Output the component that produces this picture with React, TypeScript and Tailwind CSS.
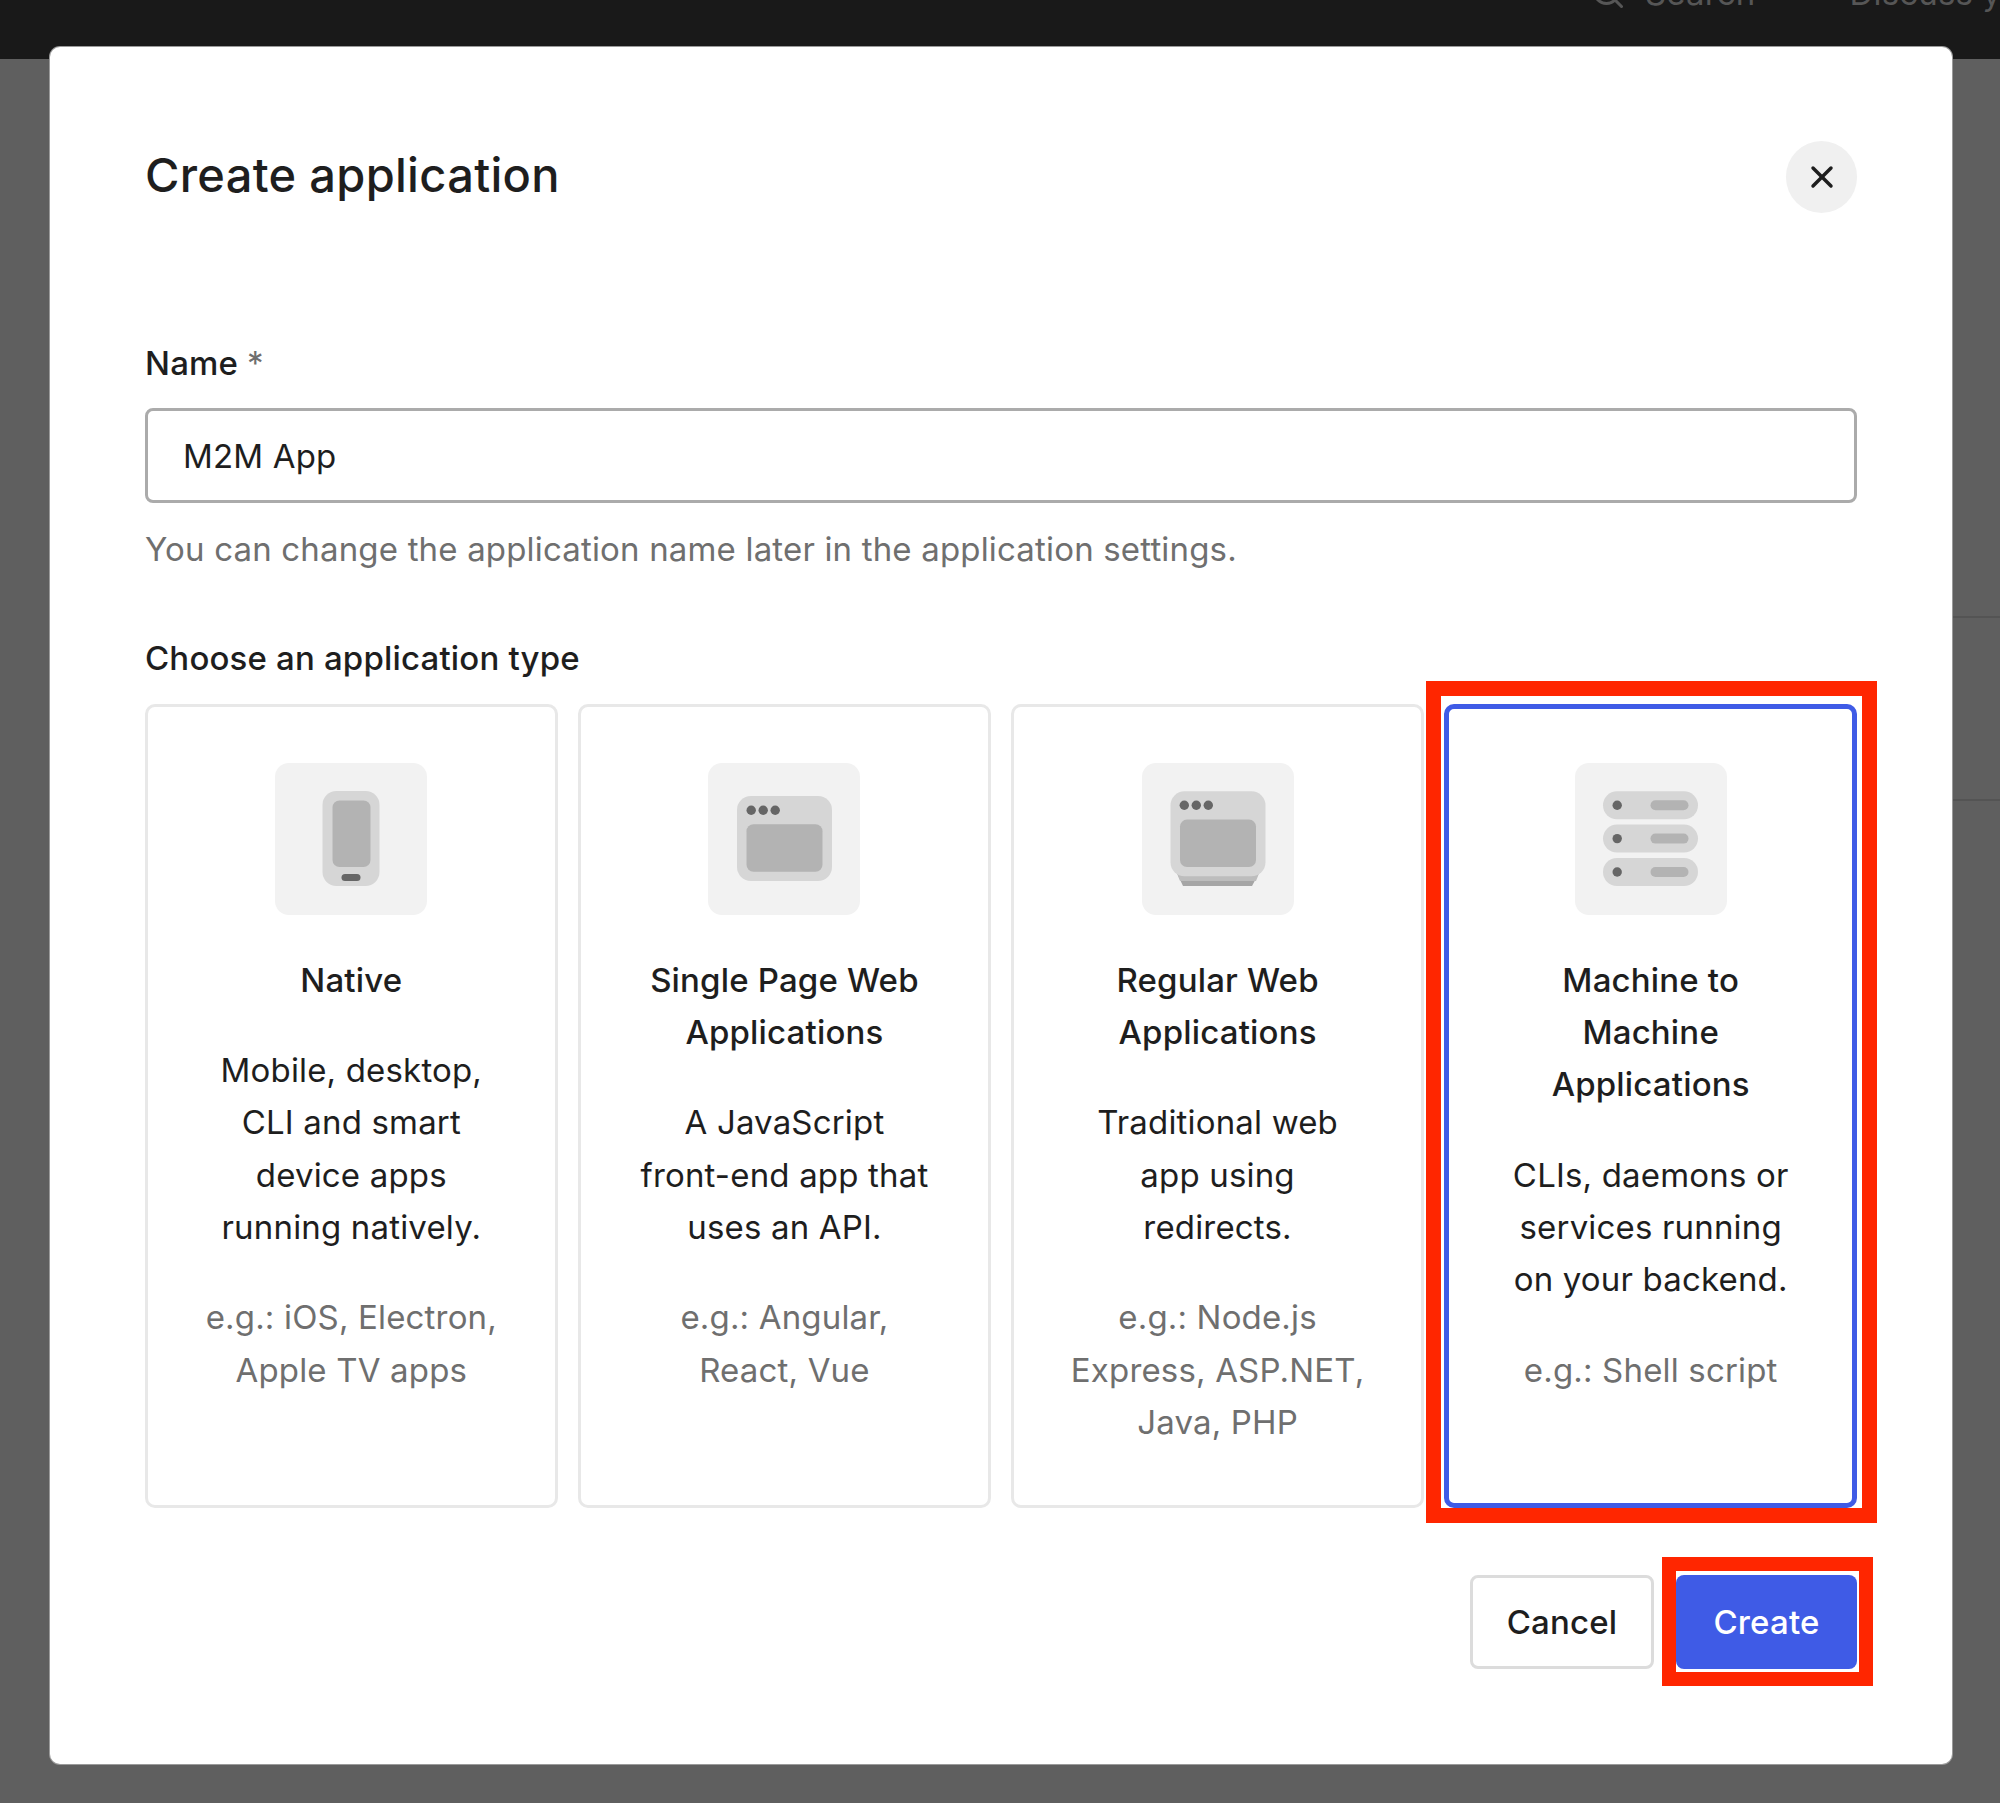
import React from 'react';
import { Search, X } from 'lucide-react';

const dots = (x: number, y: number) => (
  <g fill="#666666">
    <circle cx={x} cy={y} r="4.7" />
    <circle cx={x + 12} cy={y} r="4.7" />
    <circle cx={x + 24} cy={y} r="4.7" />
  </g>
);

const NativeIcon = () => (
  <>
    <rect x="47.5" y="28" width="57" height="95" rx="14" fill="#d6d6d6" />
    <rect x="57.5" y="37.5" width="38" height="66.5" rx="7" fill="#b3b3b3" />
    <rect x="66.5" y="111" width="19" height="7" rx="3.5" fill="#666666" />
  </>
);

const SpaIcon = () => (
  <>
    <rect x="29" y="33" width="95" height="85" rx="14" fill="#d6d6d6" />
    <rect x="38.5" y="61.3" width="76" height="47.4" rx="7" fill="#b3b3b3" />
    {dots(43.2, 47.3)}
  </>
);

const RegularIcon = () => (
  <>
    <path d="M34 108 L118 108 L110 123 L41 123 Z" fill="#a6a6a6" />
    <path d="M34 108 L118 108 L114 118 L38 118 Z" fill="#bdbdbd" />
    <rect x="28.5" y="28.3" width="95" height="85" rx="14" fill="#d6d6d6" />
    <rect x="38" y="56.6" width="76" height="47.4" rx="7" fill="#b3b3b3" />
    {dots(42.3, 42.3)}
  </>
);

const M2MIcon = () => (
  <>
    {[28.3, 61.6, 95].map((y) => (
      <g key={y}>
        <rect x="28" y={y} width="95" height="28" rx="14" fill="#d6d6d6" />
        <circle cx="42.2" cy={y + 14} r="4.7" fill="#666666" />
        <rect x="75.5" y={y + 9} width="38" height="10" rx="5" fill="#b3b3b3" />
      </g>
    ))}
  </>
);

const appTypes = [
  {
    title: ['Native'],
    desc: ['Mobile, desktop,', 'CLI and smart', 'device apps', 'running natively.'],
    eg: ['e.g.: iOS, Electron,', 'Apple TV apps'],
    icon: <NativeIcon />,
  },
  {
    title: ['Single Page Web', 'Applications'],
    desc: ['A JavaScript', 'front-end app that', 'uses an API.'],
    eg: ['e.g.: Angular,', 'React, Vue'],
    icon: <SpaIcon />,
  },
  {
    title: ['Regular Web', 'Applications'],
    desc: ['Traditional web', 'app using', 'redirects.'],
    eg: ['e.g.: Node.js', 'Express, ASP.NET,', 'Java, PHP'],
    icon: <RegularIcon />,
  },
  {
    title: ['Machine to', 'Machine', 'Applications'],
    desc: ['CLIs, daemons or', 'services running', 'on your backend.'],
    eg: ['e.g.: Shell script'],
    icon: <M2MIcon />,
    selected: true,
  },
];

const Lines = ({ items }: { items: string[] }) => (
  <>
    {items.map((line) => (
      <div key={line}>{line}</div>
    ))}
  </>
);

export default function App() {
  return (
    <div className="relative h-[1803px] w-[2000px] overflow-hidden bg-[#5f5f5f] font-['Inter',sans-serif] text-[33px] leading-[52.3px] tracking-[0.17px] text-[#1e1e1e]">
      <header className="flex h-[59px] items-start bg-[#191919] pl-[1590px] text-[#565656]">
        <div className="-mt-[33px] flex items-center">
          <Search size={36} className="mr-[19px]" />
          <span>Search</span>
          <span className="ml-[94px] w-[154px] overflow-hidden whitespace-nowrap">Discuss your</span>
        </div>
      </header>

      {/* page rows showing through the backdrop */}
      <div className="absolute top-[616px] right-0 h-[2px] w-[60px] bg-[#545454]" />
      <div className="absolute top-[799px] right-0 h-[2px] w-[60px] bg-[#545454]" />

      <div className="absolute top-[47px] left-[50px] h-[1717px] w-[1902px] rounded-[10px] bg-white px-[95px] pt-[94px] ring-1 ring-[#9a9a9a]">
        <div className="flex h-[72px] items-center justify-between">
          <h1 className="-mt-[4px] text-[47px] leading-[60px] font-medium tracking-[0.3px]">Create application</h1>
          <button className="flex h-[72px] w-[71px] items-center justify-center rounded-full bg-[#f0f0f0]">
            <X size={36} strokeWidth={2.3} />
          </button>
        </div>

        <div className="mt-[124px] font-medium">
          Name <span className="font-normal text-[#6f6f6f]">*</span>
        </div>
        <div className="mt-[19px] flex h-[95px] items-center rounded-[8px] border-[3px] border-[#ababab] px-[35px]">
          M2M App
        </div>
        <p className="mt-[20px] text-[#6f6f6f]">You can change the application name later in the application settings.</p>

        <div className="mt-[56px] font-medium">Choose an application type</div>
        <div className="mt-[20px] grid grid-cols-4 gap-[20.5px]">
          {appTypes.map((t) => (
            <div
              key={t.title[0]}
              className={`relative h-[804px] rounded-[10px] text-center ${
                t.selected
                  ? 'border-[5px] border-[#3f5be6] px-[16px] pt-[54px]'
                  : 'border-[3px] border-[#e8e8e8] px-[18px] pt-[56px]'
              }`}
            >
              <svg viewBox="0 0 152 152" className="mx-auto block h-[152px] w-[152px]">
                <rect width="152" height="152" rx="14" fill="#f2f2f2" />
                {t.icon}
              </svg>
              <div className="mt-[39px] font-medium">
                <Lines items={t.title} />
              </div>
              <div className="mt-[38px]">
                <Lines items={t.desc} />
              </div>
              <div className="mt-[38px] text-[#6f6f6f]">
                <Lines items={t.eg} />
              </div>
              {t.selected && (
                <div className="absolute -top-[28px] -right-[25px] -bottom-[20px] -left-[23px] border-[15px] border-[#ff2600]" />
              )}
            </div>
          ))}
        </div>

        <div className="mt-[67px] flex justify-end gap-[22px]">
          <button className="h-[94px] w-[184px] rounded-[8px] border-[3px] border-[#dcdcdc] font-medium">Cancel</button>
          <button className="relative h-[94px] w-[181px] rounded-[8px] bg-[#3f5be6] font-medium text-white">
            Create
            <span className="absolute -top-[18px] -right-[16px] -bottom-[17px] -left-[14px] border-[14px] border-[#ff2600]" />
          </button>
        </div>
      </div>
    </div>
  );
}
